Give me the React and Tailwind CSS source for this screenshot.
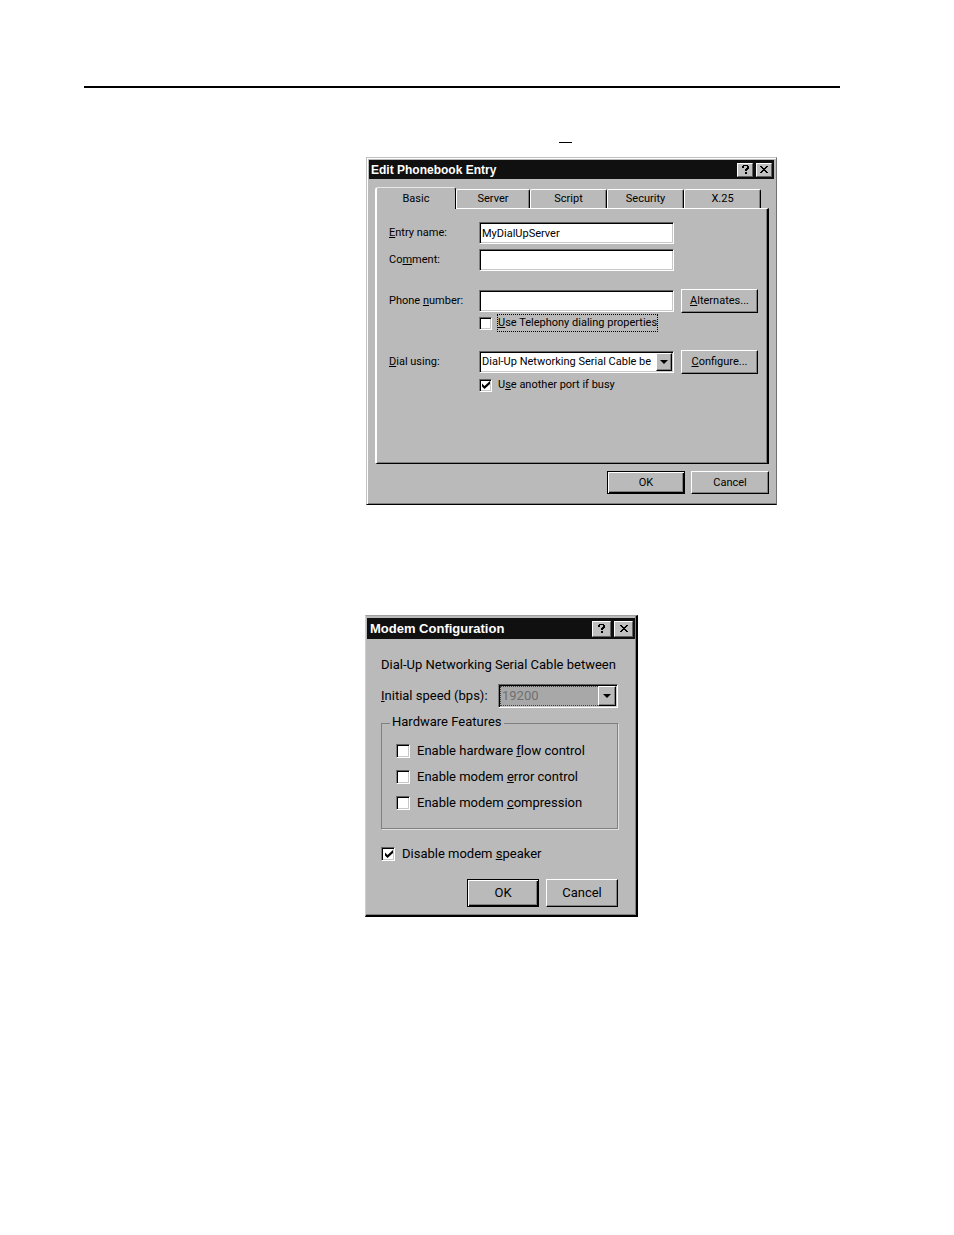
import clsx from "clsx";

const RAISED  = "border border-t-white border-l-white border-r-black border-b-black shadow-[inset_-1px_-1px_0_#808080]";
const DEFAULT = "border border-black shadow-[inset_1px_1px_0_#fff,inset_-1px_-1px_0_#000,inset_-2px_-2px_0_#808080]";
const SUNKEN  = "border border-t-[#606060] border-l-[#808080] border-r-white border-b-white shadow-[inset_1px_1px_0_#000,inset_-1px_-1px_0_#c8c8c8]";

function TitleButton({ label, large, children }) {
  return (
    <button
      type="button"
      aria-label={label}
      className={clsx(
        "flex items-center justify-center bg-[#c0c0c0] text-black border border-t-white border-l-white border-r-[#606060] border-b-[#606060]",
        large ? "w-[19px] h-4" : "w-4 h-[14px]"
      )}
    >
      {children}
    </button>
  );
}

function TitleBar({ title, large }) {
  return (
    <div className={clsx("flex items-center justify-between bg-[#101010] text-white font-bold", large ? "h-[21px] pl-[3px] pr-[2px] text-[13px]" : "h-[19px] pl-[2px] pr-[2px] text-[12px]")}>
      <h2>{title}</h2>
      <div className="flex gap-[3px]">
        <TitleButton label="Help" large={large}>
          <svg width="7" height="9" viewBox="0 0 7 9" shapeRendering="crispEdges">
            <path d="M1 0H6V1H7V4H6V5H5V6H3V4H4V3H5V1H2V3H0V1H1ZM3 7H5V9H3Z" />
          </svg>
        </TitleButton>
        <TitleButton label="Close" large={large}>
          <svg width="8" height="7" viewBox="0 0 8 7" shapeRendering="crispEdges">
            <path d="M0 0H2V1H3V2H5V1H6V0H8V1H7V2H6V3H5V4H6V5H7V6H8V7H6V6H5V5H3V6H2V7H0V6H1V5H2V4H3V3H2V2H1V1H0Z" />
          </svg>
        </TitleButton>
      </div>
    </div>
  );
}

function Button({ primary, className, children }) {
  return (
    <button type="button" className={clsx("flex items-center justify-center", primary ? DEFAULT : RAISED, className)}>
      {children}
    </button>
  );
}

function Checkbox({ checked, focused, wide, children }) {
  return (
    <label className={clsx("flex h-[18px] items-center", wide ? "gap-[6px]" : "gap-[5px]")}>
      <span className="grid shrink-0">
        <input
          type="checkbox"
          defaultChecked={checked}
          className={clsx("peer col-start-1 row-start-1 appearance-none bg-white", wide ? "size-[14px]" : "size-[13px]", SUNKEN)}
        />
        <svg className="pointer-events-none invisible col-start-1 row-start-1 place-self-center peer-checked:visible" width="9" height="8" viewBox="0 0 9 8">
          <path d="M1 2.5V5.5L3.5 8L9 3V0L3.5 5Z" />
        </svg>
      </span>
      <span className={clsx("whitespace-nowrap border border-dotted", focused ? "border-black" : "border-transparent")}>{children}</span>
    </label>
  );
}

function Dropdown({ id, value, disabled, className }) {
  return (
    <div className={clsx("grid p-px", disabled ? "bg-[#a8a8a8]" : "bg-white", SUNKEN, className)}>
      <select
        id={id}
        disabled={disabled}
        className={clsx(
          "col-start-1 row-start-1 min-w-0 w-full appearance-none outline-none disabled:opacity-100",
          disabled ? "border border-dotted border-[#404040] pl-[1px] text-[#707070]" : "pl-[1px]"
        )}
      >
        <option>{value}</option>
      </select>
      <span className={clsx("pointer-events-none col-start-1 row-start-1 flex items-center justify-center justify-self-end bg-[#bababa]", disabled ? "w-[18px]" : "w-4", RAISED)}>
        <svg width="8" height="4" viewBox="0 0 8 4"><path d="M0 0H8L4 4Z" /></svg>
      </span>
    </div>
  );
}

function Field({ id, label, value = "", children }) {
  return (
    <>
      <label htmlFor={id}>{label}</label>
      <input id={id} type="text" defaultValue={value} className={clsx("h-[22px] w-full min-w-0 bg-white px-[2px] outline-none", SUNKEN)} />
      {children}
    </>
  );
}

function Tabs() {
  const tabs = ["Server", "Script", "Security", "X.25"];
  return (
    <div role="tablist" className="grid grid-cols-[81px_74fr_77fr_77fr_77fr] items-end pr-2">
      <button role="tab" type="button" aria-selected="true" className="relative -mb-px h-[22px] rounded-t-[3px] border border-l-2 border-t-[#e8e8e8] border-b-0 border-l-white border-r-black bg-[#bababa]">
        Basic
      </button>
      {tabs.map((tab) => (
        <button key={tab} role="tab" type="button" aria-selected="false" className="h-[19px] rounded-t-[2px] border border-b-0 border-t-white border-l-white border-r-black shadow-[inset_-1px_0_0_#808080]">
          {tab}
        </button>
      ))}
    </div>
  );
}

const ROW = "grid grid-cols-[90px_minmax(0,1fr)_84px] items-center";

function PhonebookDialog() {
  return (
    <section className="w-full max-w-[411px] border border-t-[#c0c0c0] border-l-[#c0c0c0] border-r-[#707070] border-b-black bg-[#bababa] p-[2px] leading-4 shadow-[inset_1px_1px_0_#fff,inset_0_-1px_0_#808080]">
      <TitleBar title="Edit Phonebook Entry" />
      <div className="pt-2 pr-[5px] pb-2 pl-[6px] text-[11px] font-[Roboto,'Liberation_Sans',sans-serif]">
        <Tabs />
        <div className="border-t border-r-2 border-b border-l-2 border-t-white border-r-black border-b-black border-l-white pt-[13px] pr-[9px] pb-[69px] pl-3 shadow-[inset_-1px_-1px_0_#808080]">
          <div className={ROW}>
            <Field id="entry" label={<><u>E</u>ntry name:</>} value="MyDialUpServer" />
          </div>
          <div className={clsx(ROW, "mt-[5px]")}>
            <Field id="comment" label={<>Co<u>m</u>ment:</>} />
          </div>
          <div className={clsx(ROW, "mt-[18px]")}>
            <Field id="phone" label={<>Phone <u>n</u>umber:</>}>
              <Button className="ml-[7px] h-6"><span><u>A</u>lternates...</span></Button>
            </Field>
          </div>
          <div className="mt-px pl-[90px]">
            <Checkbox focused><u>U</u>se Telephony dialing properties</Checkbox>
          </div>
          <div className={clsx(ROW, "mt-[18px]")}>
            <label htmlFor="dial"><u>D</u>ial using:</label>
            <Dropdown id="dial" value="Dial-Up Networking Serial Cable be" className="h-[22px]" />
            <Button className="ml-[7px] h-6"><span><u>C</u>onfigure...</span></Button>
          </div>
          <div className="mt-[2px] pl-[90px]">
            <Checkbox checked>U<u>s</u>e another port if busy</Checkbox>
          </div>
        </div>
        <div className="mt-[7px] flex justify-end gap-[6px]">
          <Button primary className="h-[23px] w-[78px]">OK</Button>
          <Button className="h-[23px] w-[78px]">Cancel</Button>
        </div>
      </div>
    </section>
  );
}

function ModemDialog() {
  return (
    <section className="w-full max-w-[273px] border border-r-2 border-b-2 border-t-[#a0a0a0] border-l-[#d0d0d0] border-r-black border-b-black bg-[#bababa] px-px pt-[2px] text-[13px] leading-4 shadow-[inset_-1px_-1px_0_#808080]">
      <TitleBar title="Modem Configuration" large />
      <div className="pt-[18px] pr-[17px] pb-2 pl-[14px] font-[Roboto,'Liberation_Sans',sans-serif] [font-variant-ligatures:none]">
        <p className="h-[18px] whitespace-nowrap">Dial-Up Networking Serial Cable between</p>
        <div className="mt-[9px] flex items-center justify-between">
          <label htmlFor="speed"><u>I</u>nitial speed (bps):</label>
          <Dropdown id="speed" value="19200" disabled className="h-6 w-[120px]" />
        </div>
        <fieldset className="mt-[6px] border border-[#808080] px-[14px] pt-[10px] pb-4 shadow-[1px_1px_0_#e0e0e0]">
          <legend className="-ml-[6px] h-[18px] px-[2px]">Hardware Features</legend>
          <div className="flex flex-col gap-2">
            <Checkbox wide>Enable hardware <u>f</u>low control</Checkbox>
            <Checkbox wide>Enable modem <u>e</u>rror control</Checkbox>
            <Checkbox wide>Enable modem <u>c</u>ompression</Checkbox>
          </div>
        </fieldset>
        <div className="mt-4">
          <Checkbox checked wide>Disable modem <u>s</u>peaker</Checkbox>
        </div>
        <div className="mt-4 flex justify-end gap-[7px]">
          <Button primary className="h-7 w-[72px]">OK</Button>
          <Button className="h-7 w-[72px]">Cancel</Button>
        </div>
      </div>
    </section>
  );
}

export default function App() {
  return (
    <main className="min-h-screen bg-white pt-[86px] pr-[114px] pb-20 pl-[84px] font-['Liberation_Sans',Arial,sans-serif] text-black">
      <hr className="border-0 border-t-2 border-black" />
      <div className="pt-[54px] pl-[281px]">
        <hr className="ml-[194px] w-[13px] border-0 border-t border-black" />
        <div className="mt-[14px] pl-px">
          <PhonebookDialog />
        </div>
        <div className="mt-[110px]">
          <ModemDialog />
        </div>
      </div>
    </main>
  );
}
